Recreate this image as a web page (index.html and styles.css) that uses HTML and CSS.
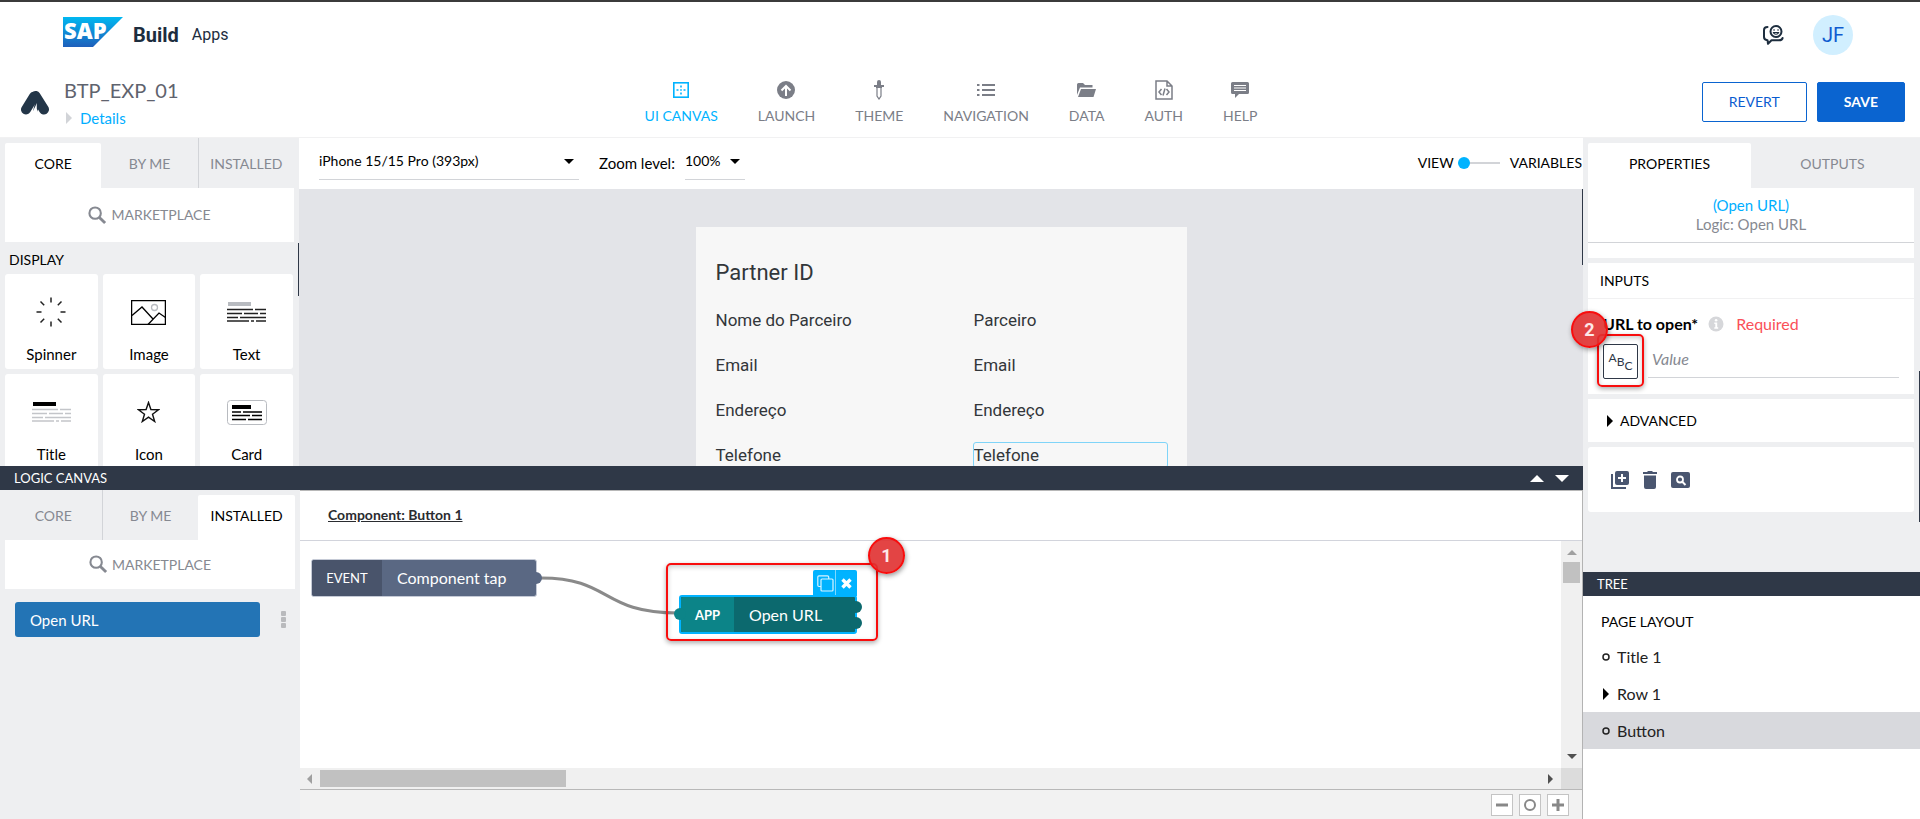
FILE: index.html
```html
<!DOCTYPE html>
<html lang="en">
<head>
<meta charset="utf-8">
<title>SAP Build Apps</title>
<link rel="stylesheet" href="styles.css">
</head>
<body>
<svg width="0" height="0" class="defs" aria-hidden="true">
  <symbol id="search" viewBox="0 0 20 20"><circle cx="7.500" cy="7.500" r="6" fill="none" stroke="currentColor" stroke-width="2.200"/><path d="M12 12l6 6" stroke="currentColor" stroke-width="3"/></symbol>
  <symbol id="right" viewBox="0 0 6 12"><path d="M0 0l6 6-6 6z" fill="currentColor"/></symbol>
  <symbol id="down" viewBox="0 0 14 7"><path d="M0 0h14l-7 7z" fill="currentColor"/></symbol>
  <symbol id="up" viewBox="0 0 14 7"><path d="M0 7h14l-7-7z" fill="currentColor"/></symbol>
</svg>
<div class="app">
  <header class="shell">
    <svg class="sap" width="60" height="30" viewBox="0 0 60 30">
      <defs><linearGradient id="g" x1="0" y1="0" x2="0" y2="1"><stop offset="0" stop-color="#00b8f1"/><stop offset="1" stop-color="#1e5fbb"/></linearGradient></defs>
      <path d="M0 0h60L30 30H0z" fill="url(#g)"/>
      <text x="1" y="22" class="sap-text">SAP</text>
    </svg>
    <strong class="product">Build</strong><span class="suite">Apps</span>
    <button class="plain feedback" aria-label="Feedback">
      <svg width="21" height="20" viewBox="0 0 21 20" fill="none" stroke="#1d2d3e" stroke-width="2" stroke-linecap="round" stroke-linejoin="round"><path d="M4.500 2C2.500 2 1 3.300 1 5v7c0 2 1 3 3.500 3.200L5 18.800l3.500-3.600H16c2 0 3.400-.7 3.600-2.200"/><circle cx="13" cy="6.500" r="5.500"/><path d="M10.300 7.500c1 2.300 4.400 2.300 5.400 0z" stroke-width="1.200"/><path d="M11 5h.1M15 5h.1" stroke-width="1.600"/></svg>
    </button>
    <button class="avatar">JF</button>
  </header>

  <div class="appbar">
    <svg class="mark" width="28" height="25" viewBox="0 0 28 25"><path d="M5 19.500L13 6.500M14.500 6L23 19.500" fill="none" stroke="#233648" stroke-width="10" stroke-linecap="round"/><path d="M14 12.500l2.500-2 1.500 6-2 5.500-4-.5z" fill="#233648"/><path d="M10.500 24l5.500-11c-.5 4-.5 7 1.500 11z" fill="#fff"/></svg>
    <div class="project">
      <h1>BTP_EXP_01</h1>
      <a href="#details" class="details"><svg width="6" height="12"><use href="#right"/></svg>Details</a>
    </div>
    <nav class="nav">
      <a href="#canvas" class="on"><svg width="16" height="16" viewBox="0 0 16 16"><rect x=".8" y=".8" width="14.400" height="14.400" fill="none" stroke="currentColor" stroke-width="1.600"/><path d="M7.200 3.500h1.600v2H7.200zM7.200 7.200h1.600v1.600H7.200zM7.200 10.500h1.600v2H7.200zM3.500 7.200h2v1.600h-2zM10.500 7.200h2v1.600h-2z" fill="currentColor"/></svg>UI CANVAS</a>
      <a href="#launch"><svg width="18" height="18" viewBox="0 0 18 18"><circle cx="9" cy="9" r="9" fill="currentColor"/><path d="M9 15V6M4.500 9.500L9 5l4.500 4.500" fill="none" stroke="#fff" stroke-width="2"/></svg>LAUNCH</a>
      <a href="#theme"><svg width="10" height="20" viewBox="0 0 10 20"><path d="M3 2a2 2 0 0 1 4 0v3h3v2H8v1H2V7H0V5h3z" fill="currentColor"/><path d="M3 8v8l2 3 2-3V8" fill="none" stroke="currentColor" stroke-width="1.200"/></svg>THEME</a>
      <a href="#navigation"><svg width="18" height="14" viewBox="0 0 18 14"><path d="M5 2h13M5 7h13M5 12h13" stroke="currentColor" stroke-width="2.200"/><path d="M0 2h2.500M0 7h2.500M0 12h2.500" stroke="currentColor" stroke-width="2.200"/></svg>NAVIGATION</a>
      <a href="#data"><svg width="19" height="14" viewBox="0 0 19 14"><path d="M0 12V1.500Q0 0 1.500 0H6l2 2h7.500v2.500H3z" fill="currentColor"/><path d="M4 6h15l-2.500 8H1z" fill="currentColor"/></svg>DATA</a>
      <a href="#auth"><svg width="18" height="20" viewBox="0 0 18 20" fill="none" stroke="currentColor" stroke-width="1.500"><path d="M1 1h11l5 5v13H1zM12 1v5h5M6.500 9L4 12l2.500 3M11.500 9l2.500 3-2.500 3M10 8.500L8 15.500"/></svg>AUTH</a>
      <a href="#help"><svg width="18" height="16" viewBox="0 0 18 16"><path d="M1.500 0h15Q18 0 18 1.500v9Q18 12 16.500 12H8l-4 4v-4H1.500Q0 12 0 10.500v-9Q0 0 1.500 0z" fill="currentColor"/><path d="M3 3.500h12M3 6h12M3 8.500h12" stroke="#fff" stroke-width="1.200"/></svg>HELP</a>
    </nav>
    <div class="actions"><button class="btn">REVERT</button><button class="btn primary">SAVE</button></div>
  </div>

  <div class="work">
    <div class="stage">
      <section class="design">
        <aside class="side">
          <div class="tabs triple"><button class="tab on">CORE</button><button class="tab">BY ME</button><button class="tab split">INSTALLED</button></div>
          <button class="market"><svg width="19" height="19"><use href="#search"/></svg>MARKETPLACE</button>
          <h2 class="group">DISPLAY</h2>
          <div class="tiles">
            <button class="tile"><span class="pic"><svg width="30" height="30" viewBox="0 0 30 30" stroke="#222" stroke-width="1.500"><path d="M15 .5v5M15 24.500v5M.5 15h5M24.500 15h5M4.500 4.500l3.700 3.700M21.800 21.800l3.700 3.700M4.500 25.500l3.700-3.700M21.800 8.200l3.700-3.700"/></svg></span>Spinner</button>
            <button class="tile"><span class="pic"><svg width="35" height="25" viewBox="0 0 35 25" fill="none" stroke="#000" stroke-width="1.300"><rect x=".6" y=".6" width="33.800" height="23.800"/><path d="M1 15.500L11 7l11 12M17 24.500L28 13l6.500 4.500"/><circle cx="23.500" cy="7.500" r="3" stroke="#b8bbc0"/></svg></span>Image</button>
            <button class="tile"><span class="pic"><svg width="39" height="20" viewBox="0 0 39 20"><path d="M1 0h23v4H1z" fill="#b8bbc0"/><path d="M0 7.500h26M28 7.500h11M0 11.500h15M17 11.500h14M33 11.500h6M0 15.500h11M13 15.500h26M0 19h22M24 19h3M29 19h10" stroke="#222" stroke-width="1.500"/></svg></span>Text</button>
            <button class="tile"><span class="pic"><svg width="39" height="20" viewBox="0 0 39 20"><path d="M1 0h23v4H1z"/><path d="M0 7.500h26M28 7.500h11M0 11.500h15M17 11.500h14M33 11.500h6M0 15.500h11M13 15.500h26M0 19h22M24 19h3M29 19h10" stroke="#c3c5c9" stroke-width="1.500"/></svg></span>Title</button>
            <button class="tile"><span class="pic"><svg width="23" height="22" viewBox="0 0 23 22"><path d="M11.500 1.500l2.400 7 7.600.2-6 4.500 2.200 7.300-6.200-4.300-6.200 4.300 2.200-7.300-6-4.500 7.600-.2z" fill="none" stroke="#111" stroke-width="1.400"/></svg></span>Icon</button>
            <button class="tile"><span class="pic"><svg width="40" height="25" viewBox="0 0 40 25"><rect x=".5" y=".5" width="39" height="24" rx="3" fill="none" stroke="#b8bbc0"/><path d="M5 5h19v4H5z"/><path d="M5 12h9M16 12h19M5 15.500h18M25 15.500h10M5 19.500h14M21 19.500h14" stroke="#000" stroke-width="1.400"/></svg></span>Card</button>
          </div>
          <i class="thumb"></i>
        </aside>
        <div class="viewer">
          <div class="toolbar">
            <span class="pick device"><select aria-label="Device"><option>iPhone 15/15 Pro (393px)</option></select><svg width="10" height="5"><use href="#down"/></svg></span>
            <label for="zoom">Zoom level:</label>
            <span class="pick"><select id="zoom"><option>100%</option></select><svg width="10" height="5"><use href="#down"/></svg></span>
            <label class="mode"><span>VIEW</span><input type="range" min="0" max="1" value="0"><span>VARIABLES</span></label>
          </div>
          <div class="preview">
            <div class="phone">
              <h2>Partner ID</h2>
              <div class="fields">
                <span>Nome do Parceiro</span><span>Parceiro</span>
                <span>Email</span><span>Email</span>
                <span>Endereço</span><span>Endereço</span>
                <span>Telefone</span><span class="picked">Telefone</span>
              </div>
            </div>
            <i class="thumb"></i>
          </div>
        </div>
      </section>

      <section class="logic">
        <div class="bar"><h2>LOGIC CANVAS</h2><button class="plain" aria-label="Expand"><svg width="14" height="7"><use href="#up"/></svg></button><button class="plain" aria-label="Collapse"><svg width="14" height="7"><use href="#down"/></svg></button></div>
        <div class="logic-body">
          <aside class="side">
            <div class="tabs triple"><button class="tab">CORE</button><button class="tab split">BY ME</button><button class="tab on">INSTALLED</button></div>
            <button class="market short"><svg width="19" height="19"><use href="#search"/></svg>MARKETPLACE</button>
            <div class="installed"><button class="flow">Open URL</button><button class="plain" aria-label="More"><svg width="5" height="17" viewBox="0 0 5 17" fill="#b9babd"><rect width="5" height="5" rx="1"/><rect y="6" width="5" height="5" rx="1"/><rect y="12" width="5" height="5" rx="1"/></svg></button></div>
          </aside>
          <div class="graph">
            <div class="crumb"><a href="#component">Component: Button 1</a></div>
            <div class="scroll">
              <div class="canvas">
                <svg class="wire" width="150" height="60"><path d="M1 12C72 12 60 47 138 47" fill="none" stroke="#8a8a8a" stroke-width="3"/></svg>
                <div class="node event"><b>EVENT</b><span>Component tap</span><i class="port out"></i></div>
                <div class="tools"><button aria-label="Duplicate"><svg width="17" height="17" viewBox="0 0 17 17" fill="none" stroke="#d9f3ff" stroke-width="1.200"><rect x="4" y="4" width="12" height="12" rx="1"/><path d="M4 11.500H2q-1.200 0-1.200-1.200V2Q.8.800 2 .8h8.500q1.200 0 1.200 1.200v2"/></svg></button><button aria-label="Delete"><svg width="11" height="11" viewBox="0 0 11 11"><path d="M1.500 1.500l8 8M9.500 1.500l-8 8" stroke="#fff" stroke-width="3.400"/></svg></button></div>
                <div class="node flowfn"><i class="port in"></i><b>APP</b><span>Open URL</span><i class="port out a"></i><i class="port out b"></i></div>
                <div class="ring ring-node"></div><div class="badge badge-node">1</div>
              </div>
              <div class="vbar"><svg width="10" height="5" color="#a0a0a0"><use href="#up"/></svg><i></i><svg class="end" width="10" height="5" color="#505050"><use href="#down"/></svg></div>
              <div class="hbar"><svg class="back" width="5" height="10" color="#a0a0a0"><use href="#right"/></svg><i></i><svg class="end" width="5" height="10" color="#505050"><use href="#right"/></svg></div>
              <div class="corner"></div>
            </div>
            <div class="zoombar">
              <button aria-label="Zoom out"><svg width="12" height="12" viewBox="0 0 12 12"><path d="M0 6h12" stroke="#888" stroke-width="3"/></svg></button>
              <button aria-label="Reset zoom"><svg width="12" height="12" viewBox="0 0 12 12"><circle cx="6" cy="6" r="5" fill="none" stroke="#888" stroke-width="2"/></svg></button>
              <button aria-label="Zoom in"><svg width="12" height="12" viewBox="0 0 12 12"><path d="M0 6h12M6 0v12" stroke="#888" stroke-width="3"/></svg></button>
            </div>
          </div>
        </div>
      </section>
    </div>

    <aside class="inspector">
      <div class="props">
        <div class="tabs pair"><button class="tab on">PROPERTIES</button><button class="tab">OUTPUTS</button></div>
        <div class="who"><a href="#node">(Open URL)</a><span>Logic: Open URL</span></div>
        <div class="strip"></div>
        <div class="card inputs">
          <h2>INPUTS</h2>
          <div class="field">
            <div class="caption"><label for="url">URL to open*</label><svg width="16" height="16" viewBox="0 0 16 16"><circle cx="8" cy="8" r="7.500" fill="#d6d7da"/><path d="M6.300 6.500h2.900v4.800h1v1.400H6.300v-1.400h1V7.900h-1z" fill="#fff"/><circle cx="8.100" cy="4.300" r="1.300" fill="#fff"/></svg><em>Required</em></div>
            <div class="entry"><button class="abc" aria-label="Text binding"><span>A</span><span>B</span><span>C</span></button><input id="url" placeholder="Value">
              <div class="ring ring-bind"></div><div class="badge badge-bind">2</div></div>
          </div>
        </div>
        <button class="card advanced"><svg width="6" height="12"><use href="#right"/></svg>ADVANCED</button>
        <div class="card icons">
          <button class="plain" aria-label="Duplicate"><svg width="18" height="18" viewBox="0 0 18 18"><path d="M1 3v14h14" fill="none" stroke="#4a5670" stroke-width="2"/><rect x="4" y="0" width="14" height="14" rx="2" fill="#4a5670"/><path d="M11 3v8M7 7h8" stroke="#fff" stroke-width="2"/></svg></button>
          <button class="plain" aria-label="Delete"><svg width="14" height="18" viewBox="0 0 14 18" fill="#4a5670"><path d="M0 1h4l1-1h4l1 1h4v2H0zM1 4.500h12V16q0 2-2 2H3q-2 0-2-2z"/></svg></button>
          <button class="plain" aria-label="Inspect"><svg width="19" height="16" viewBox="0 0 19 16"><rect width="19" height="16" rx="2" fill="#4a5670"/><circle cx="9" cy="7.500" r="3" fill="none" stroke="#fff" stroke-width="1.800"/><path d="M11 9.500l3.500 3.500" stroke="#fff" stroke-width="2"/></svg></button>
        </div>
        <i class="thumb"></i>
      </div>
      <section class="tree">
        <div class="bar"><h2>TREE</h2></div>
        <h3>PAGE LAYOUT</h3>
        <ul>
          <li><svg width="8" height="12"><circle cx="4" cy="6" r="3" fill="none" stroke="#222" stroke-width="1.500"/></svg>Title 1</li>
          <li><svg width="8" height="12"><path d="M1 0l6 6-6 6z"/></svg>Row 1</li>
          <li class="on"><svg width="8" height="12"><circle cx="4" cy="6" r="3" fill="none" stroke="#222" stroke-width="1.500"/></svg>Button</li>
        </ul>
      </section>
    </aside>
  </div>
</div>
</body>
</html>
```
FILE: styles.css
```css
* { box-sizing: border-box; }
body { margin: 0; color: #111; background: #fff; font: 14px/18px Lato, "Open Sans", sans-serif; }
button, input, select { font: inherit; color: inherit; }
button { cursor: pointer; border: 0; padding: 0; }
a { color: inherit; text-decoration: none; }
h1, h2, h3, ul { margin: 0; padding: 0; font-size: 14px; font-weight: 400; list-style: none; }
svg { display: block; flex: none; }
i { display: block; }
.defs { position: absolute; }
.plain { background: none; }

.app { display: flex; flex-direction: column; height: 100vh; border-top: 2px solid #3b3b3b; overflow: hidden; }

.shell { display: flex; align-items: center; height: 66px; flex: none; padding: 0 67px 0 63px; }
.sap { margin-right: 10px; margin-top: -6px; }
.sap-text { font: 800 22px "Open Sans", sans-serif; fill: #fff; }
.product { font: 700 20px/24px Roboto, sans-serif; color: #1d2d3e; margin-right: 13px; }
.suite { font: 16px/20px Roboto, sans-serif; color: #1d2d3e; margin-right: auto; }
.avatar { width: 40px; height: 40px; border-radius: 50%; background: #d1efff; color: #0f5bd0; font: 20px/40px Roboto, sans-serif; margin-left: 29px; }

.appbar { display: grid; grid-template-columns: 1fr auto 1fr; align-items: center; height: 70px; flex: none; border-bottom: 1px solid #f1f1f2; padding: 0 15px 0 21px; grid-template-areas: "id nav act"; }
.mark { grid-area: id; }
.project { grid-area: id; padding-left: 43px; }
.project h1 { font-size: 20px; line-height: 24px; color: #5f636e; }
.details { display: flex; align-items: center; gap: 8px; margin-top: 6px; padding-left: 2px; font-size: 15px; line-height: 20px; color: #00aeff; }
.details svg { color: #d2d4d8; }
.nav { grid-area: nav; display: flex; gap: 40px; margin-right: 24px; color: #7b7e87; }
.nav a { display: flex; flex-direction: column; align-items: center; }
.nav a.on { color: #00b3ff; }
.nav svg { margin: 0 0 7px; height: 20px; }
.actions { grid-area: act; display: flex; justify-content: flex-end; gap: 10px; margin-top: -2px; }
.btn { height: 40px; padding: 0 26px; border: 1px solid #0a64d0; border-radius: 2px; background: #fff; color: #0a5cd0; }
.btn.primary { background: #0a64d0; color: #fff; font-weight: 700; }

.work { display: grid; grid-template-columns: minmax(0, 1fr) 337px; flex: 1; min-height: 0; }
.stage { display: flex; flex-direction: column; min-height: 0; }
.design { display: grid; grid-template-columns: 299px minmax(0, 1fr); flex: 1; min-height: 0; }
.side { position: relative; background: #eeeff1; padding: 5px 5px 0; overflow: hidden; }
.thumb { position: absolute; right: 0; width: 1px; background: #2f3847; }
.side .thumb { top: 105px; height: 53px; }

.tabs { display: grid; height: 45px; }
.tabs.triple { grid-template-columns: 1fr 1fr 1fr; }
.tabs.pair { grid-template-columns: 1fr 1fr; }
.tab { background: none; color: #868991; padding-bottom: 4px; }
.tab.on { background: #fff; color: #000; border-radius: 2px 2px 0 0; }
.tab.split { border-left: 1px solid #d2d4d8; margin-top: -5px; padding-top: 5px; }
.market { display: flex; align-items: center; justify-content: center; gap: 4px; width: 100%; height: 54px; background: #fff; color: #868991; }
.market.short { height: 49px; }
.group { padding: 9px 4px 5px; color: #000; }
.tiles { display: grid; grid-template-columns: repeat(3, 1fr); gap: 5px; padding-right: 1px; }
.tile { display: flex; flex-direction: column; align-items: center; height: 95px; background: #fff; border-radius: 3px; font-size: 15px; line-height: 20px; color: #000; }
.pic { display: grid; place-items: center; height: 76px; margin-bottom: -6px; }

.viewer { display: flex; flex-direction: column; min-height: 0; }
.toolbar { display: flex; align-items: center; height: 51px; flex: none; padding: 0 1px 2px 20px; font-size: 15px; color: #000; }
.pick { display: grid; align-items: center; height: 34px; border-bottom: 1px solid #d2d4d8; padding-bottom: 2px; }
.pick > * { grid-area: 1 / 1; }
.pick select { appearance: none; border: 0; background: none; padding: 0 24px 0 0; outline: 0; font-size: 14px; }
.pick svg { justify-self: end; margin-right: 5px; pointer-events: none; }
.device { width: 260px; margin-right: 20px; }
.toolbar label[for] { margin-right: 10px; }
.mode { display: flex; align-items: center; margin-left: auto; font-size: 14px; }
.mode input { appearance: none; width: 42px; height: 12px; margin: 0 10px 0 4px; background: linear-gradient(#d2d4d8, #d2d4d8) center / 100% 2px no-repeat; }
.mode input::-webkit-slider-thumb { appearance: none; width: 12px; height: 12px; border-radius: 50%; background: #00b3ff; }
.preview { position: relative; flex: 1; min-height: 0; background: #e3e4e8; overflow: hidden; padding-top: 38px; }
.preview .thumb { top: 0; height: 76px; }
.phone { width: 491px; margin: 0 auto; height: 400px; padding: 32px 20px; background: #f7f7f7; color: #32363a; font-family: Roboto, sans-serif; }
.phone h2 { font-size: 22px; line-height: 28px; margin-bottom: 21px; }
.fields { display: grid; grid-template-columns: 1fr 1fr; column-gap: 65px; row-gap: 21px; font-size: 17px; line-height: 24px; }
.picked { outline: 1px solid #7fd4f8; border-radius: 2px; }

.logic { display: flex; flex-direction: column; height: 353px; flex: none; }
.bar { display: flex; align-items: center; gap: 11px; height: 24px; flex: none; padding: 0 14px; background: #2f3847; color: #fff; }
.bar h2 { margin-right: auto; font-size: 13px; }
.logic-body { display: grid; grid-template-columns: 300px minmax(0, 1fr); flex: 1; min-height: 0; }
.installed { display: flex; align-items: center; padding: 13px 9px 0 10px; }
.flow { width: 245px; height: 35px; margin-right: auto; padding-left: 15px; text-align: left; background: #2374b5; border-radius: 3px; color: #fff; font-size: 15px; }

.graph { display: flex; flex-direction: column; min-height: 0; border-top: 1px solid #b8b8b8; border-right: 1px solid #b3b3b3; }
.crumb { height: 50px; flex: none; padding: 15px 28px; border-bottom: 1px solid #d2d4dc; font-weight: 700; color: #2a2c30; }
.crumb a { text-decoration: underline; }
.scroll { display: grid; grid-template: minmax(0, 1fr) 21px / minmax(0, 1fr) 21px; flex: 1; min-height: 0; }
.canvas { position: relative; }
.vbar { display: flex; flex-direction: column; align-items: center; padding: 9px 2px 9px; background: #f0f0f0; }
.vbar i { width: 100%; height: 21px; margin-top: 7px; background: #c1c1c1; }
.vbar .end { margin-top: auto; }
.hbar { display: flex; align-items: center; padding: 2px 8px 2px 7px; background: #f0f0f0; }
.hbar i { width: 246px; height: 100%; margin-left: 8px; background: #c1c1c1; }
.hbar .back { transform: scaleX(-1); }
.hbar .end { margin-left: auto; }
.corner { background: #dcdcdc; }
.zoombar { display: flex; justify-content: flex-end; align-items: center; gap: 6px; height: 30px; flex: none; padding: 0 13px; border-top: 1px solid #b8b8b8; background: #f2f2f2; }
.zoombar button { display: grid; place-items: center; width: 22px; height: 22px; border: 1px solid #c4c4c4; background: #fff; }

.node { position: absolute; display: flex; color: #fff; font-size: 16px; border-radius: 3px; }
.node b { display: grid; place-items: center; font-size: 13px; font-weight: 400; border-radius: 2px 0 0 2px; }
.node span { display: flex; align-items: center; padding-left: 15px; flex: 1; }
.event { left: 11px; top: 18px; width: 226px; height: 38px; background: #5a6883; border: 1px solid #c5cad6; }
.event b { width: 70px; background: #49546b; }
.flowfn { left: 379px; top: 54px; width: 178px; height: 39px; background: #0c696e; border: 2px solid #00b3ff; }
.flowfn b { width: 53px; background: #0c8488; font-weight: 700; }
.port { position: absolute; width: 12px; height: 12px; border-radius: 50%; background: #5a6883; }
.event .out { right: -6px; top: 12px; }
.flowfn .port { background: #0c696e; }
.flowfn .in { left: -7px; top: 11px; background: #0c8488; }
.flowfn .out { right: -7px; }
.flowfn .a { top: 4px; }
.flowfn .b { top: 20px; }
.wire { position: absolute; left: 240px; top: 25px; }
.tools { position: absolute; left: 513px; top: 29px; display: flex; height: 26px; background: #00b3ff; border-radius: 2px 2px 0 0; }
.tools button { display: grid; place-items: center; width: 21px; background: none; }
.tools button:first-child { width: 23px; border-right: 1px solid #7fd9ff; padding-left: 2px; }
.ring { position: absolute; border: 2px solid #f80d0d; border-radius: 5px; box-shadow: 0 2px 5px #0005, inset 0 2px 5px #0003; pointer-events: none; }
.badge { position: absolute; display: grid; place-items: center; width: 37px; height: 37px; border: 2px solid #f80d0d; border-radius: 50%; background: #e03030e6; color: #fde8e8; font: 700 18px/18px Roboto, sans-serif; box-shadow: 1px 2px 5px #0006; }
.ring-node { left: 366px; top: 22px; width: 212px; height: 78px; }
.badge-node { left: 568px; top: -4px; }

.inspector { display: flex; flex-direction: column; min-height: 0; }
.props { position: relative; flex: 1; min-height: 0; padding: 5px 6px 0 5px; background: #eeeff1; }
.props .thumb { top: 233px; height: 151px; }
.who { display: flex; flex-direction: column; align-items: center; height: 55px; padding-top: 8px; background: #fff; border-bottom: 1px solid #d2d4d8; font-size: 15px; line-height: 19px; color: #868991; }
.who a { color: #00aeff; }
.strip { height: 15px; background: #fff; margin-bottom: 5px; }
.card { background: #fff; margin-bottom: 5px; }
.inputs { height: 131px; }
.inputs h2 { height: 36px; line-height: 35px; padding-left: 12px; border-bottom: 1px solid #f1f1f2; color: #000; }
.field { padding: 15px 15px 0 15px; }
.caption { display: flex; align-items: center; font-size: 16px; line-height: 20px; }
.caption label { font-weight: 700; color: #000; }
.caption svg { margin: 0 12px 0 10px; }
.caption em { font-style: normal; color: #fa5058; }
.entry { position: relative; display: flex; gap: 10px; margin-top: 10px; }
.abc { display: flex; align-items: center; justify-content: center; width: 35px; height: 35px; border: 1px solid #2f3847; border-radius: 2px; background: #fff; color: #2f3847; font-size: 12px; line-height: 14px; }
.abc span:first-child { margin-bottom: 8px; }
.abc span:last-child { margin-top: 8px; }
.entry input { flex: 1; min-width: 0; height: 34px; border: 0; border-bottom: 1px solid #d2d4d8; padding: 0 0 4px 4px; font-size: 16px; outline: 0; }
.entry input::placeholder { font-style: italic; color: #868991; }
.ring-bind { left: -6px; top: -10px; width: 47px; height: 53px; }
.badge-bind { left: -32px; top: -33px; z-index: 2; }
.advanced { display: flex; align-items: center; gap: 7px; width: 100%; height: 43px; padding-left: 19px; color: #000; }
.icons { display: flex; align-items: center; gap: 14px; height: 65px; padding-left: 23px; border-radius: 3px; }

.tree { height: 247px; flex: none; background: #fff; }
.tree h3 { padding: 17px 18px 7px; color: #000; }
.tree li { display: flex; align-items: center; gap: 7px; height: 37px; padding-left: 19px; font-size: 16px; color: #222; }
.tree li.on { background: #d8d9dd; }
```
